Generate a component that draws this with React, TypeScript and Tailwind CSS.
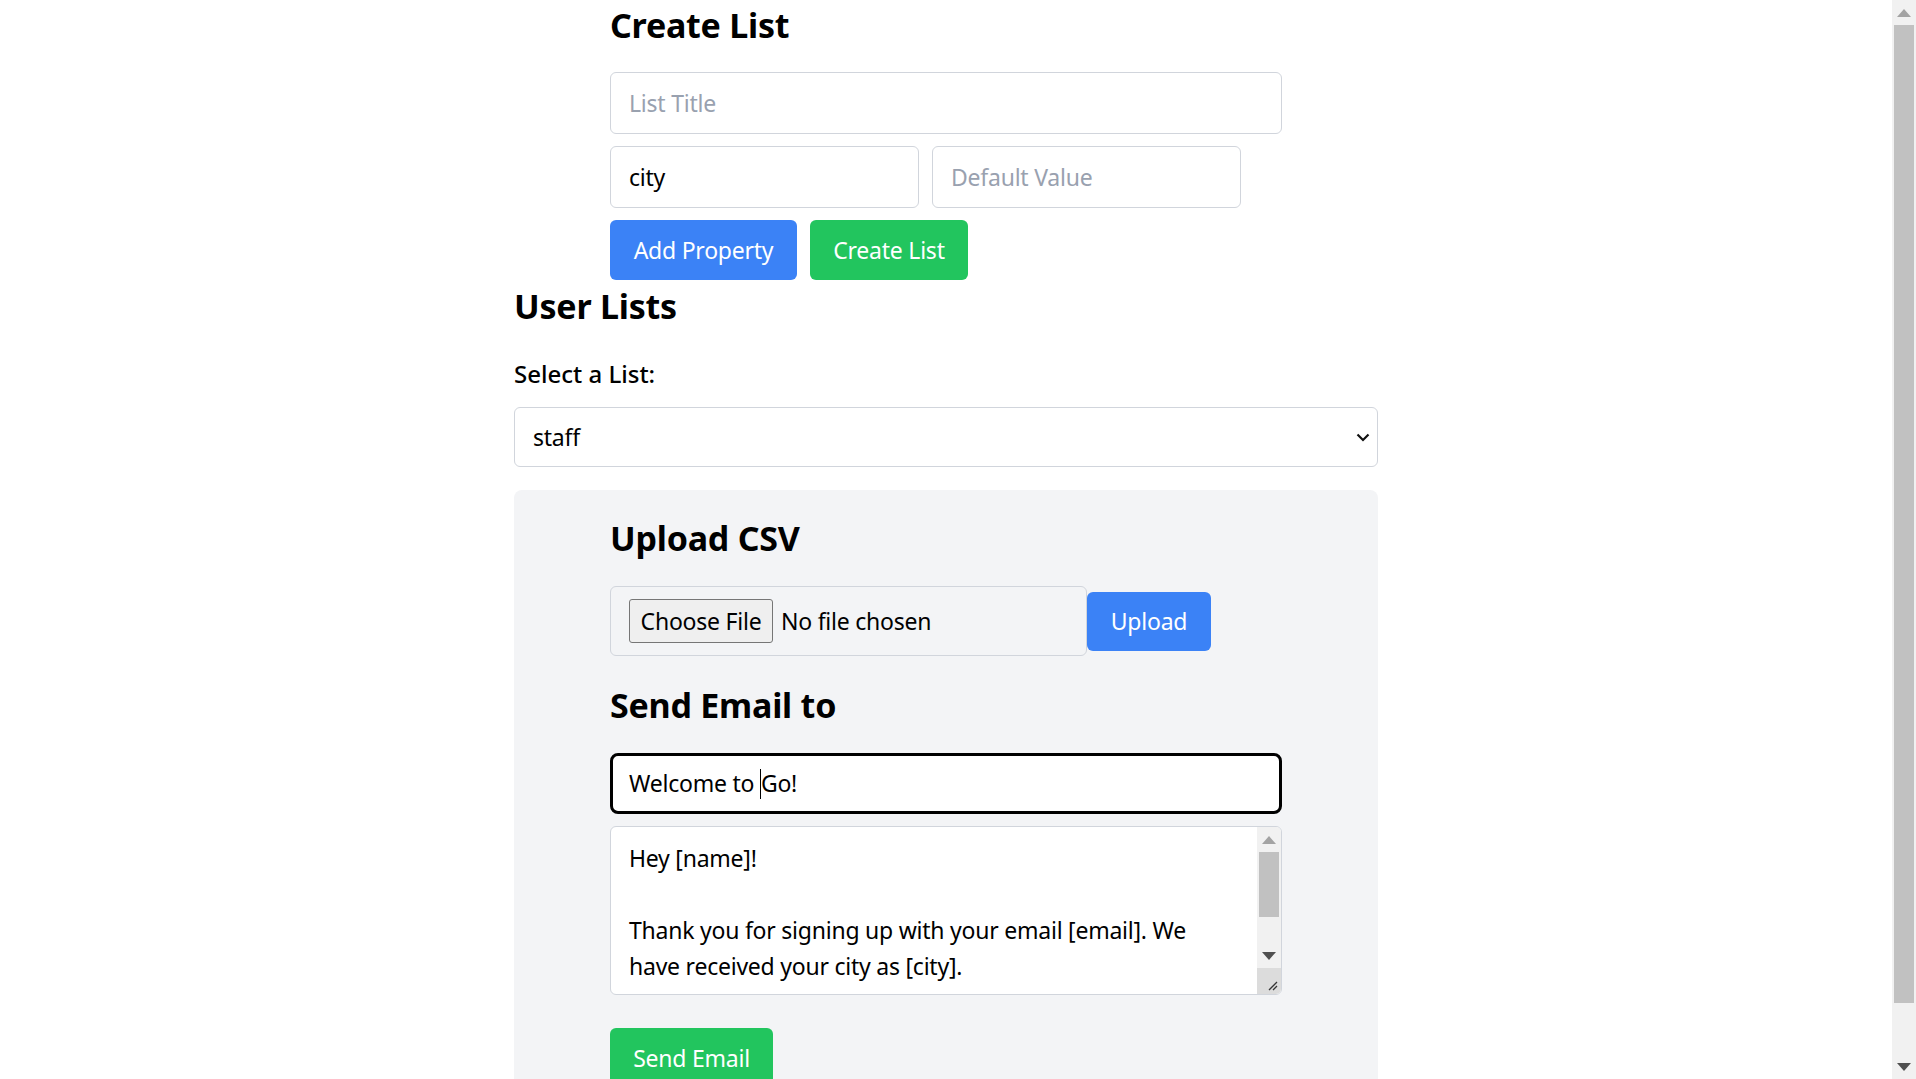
import React from "react";

const font = { fontFamily: '"Noto Sans", "Open Sans", sans-serif' };

function UpArrow({ color }: { color: string }) {
  return (
    <svg width="14" height="8" viewBox="0 0 14 8">
      <polygon points="7,0 14,8 0,8" fill={color} />
    </svg>
  );
}

function DownArrow({ color }: { color: string }) {
  return (
    <svg width="14" height="8" viewBox="0 0 14 8">
      <polygon points="0,0 14,0 7,8" fill={color} />
    </svg>
  );
}

export default function App() {
  return (
    <div className="flex h-screen overflow-hidden bg-white text-black" style={font}>
      {/* page content */}
      <div className="flex-1 min-w-0 text-[23px] tracking-[-0.01em]">
        <div className="w-[864px] mx-auto">
          {/* Create List */}
          <div className="w-[672px] mx-auto">
            <h2 className="text-[34px] leading-[50px] font-bold mb-[22px]">Create List</h2>
            <input
              placeholder="List Title"
              className="block w-full h-[62px] border border-gray-300 rounded-[6px] px-[18px] text-[23px] placeholder:text-gray-400 mb-[12px] outline-none"
            />
            <div className="flex gap-[13px] mb-[12px]">
              <input
                defaultValue="city"
                className="w-[309px] h-[62px] border border-gray-300 rounded-[6px] px-[18px] text-[23px] outline-none"
              />
              <input
                placeholder="Default Value"
                className="w-[309px] h-[62px] border border-gray-300 rounded-[6px] px-[18px] text-[23px] placeholder:text-gray-400 outline-none"
              />
            </div>
            <div className="flex gap-[13px]">
              <button className="w-[187px] h-[60px] rounded-[6px] bg-[#3b82f6] text-white text-[23px]">
                Add Property
              </button>
              <button className="w-[158px] h-[60px] rounded-[6px] bg-[#22c55e] text-white text-[23px]">
                Create List
              </button>
            </div>
          </div>

          {/* User Lists */}
          <h2 className="text-[34px] leading-[48px] font-bold mt-[2px] mb-[26px]">User Lists</h2>
          <label className="block text-[24px] leading-[36px] font-medium tracking-normal mb-[15px]">Select a List:</label>
          <div className="flex items-center justify-between h-[60px] border border-gray-300 rounded-[6px] pl-[18px] pr-[7px]">
            <span>staff</span>
            <svg width="14" height="9" viewBox="0 0 14 9">
              <path d="M1.5 1.5 L7 7 L12.5 1.5" fill="none" stroke="#111" strokeWidth="2.2" />
            </svg>
          </div>

          {/* panel */}
          <div className="mt-[23px] bg-[#f3f4f6] rounded-[8px] pt-[24px] pb-[24px]">
            <div className="w-[672px] mx-auto">
              <h2 className="text-[34px] leading-[48px] font-bold mb-[24px]">Upload CSV</h2>
              <div className="flex items-center">
                <div className="w-[477px] h-[70px] border border-gray-300 rounded-[6px] px-[18px] flex items-center">
                  <span className="h-[44px] w-[144px] flex items-center justify-center border border-[#767676] bg-[#efefef] rounded-[3px]">
                    Choose File
                  </span>
                  <span className="ml-[8px]">No file chosen</span>
                </div>
                <button className="w-[124px] h-[59px] rounded-[6px] bg-[#3b82f6] text-white text-[23px]">
                  Upload
                </button>
              </div>

              <h2 className="text-[34px] leading-[48px] font-bold mt-[25px] mb-[24px]">Send Email to</h2>
              <div className="h-[61px] border-[3px] border-black rounded-[8px] px-[16px] flex items-center bg-white mb-[12px]">
                <span className="whitespace-pre">Welcome to </span>
                <span className="w-[1px] h-[30px] bg-black" />
                <span>Go!</span>
              </div>

              <div className="h-[169px] border border-gray-300 rounded-[6px] bg-white flex overflow-hidden">
                <div className="flex-1 pl-[18px] pt-[13px] leading-[36px] whitespace-nowrap">
                  <div>Hey [name]!</div>
                  <div>&nbsp;</div>
                  <div>Thank you for signing up with your email [email]. We</div>
                  <div>have received your city as [city].</div>
                </div>
                <div className="w-[24px] bg-[#f1f1f1] flex flex-col">
                  <div className="h-[25px] flex items-center justify-center">
                    <UpArrow color="#a3a3a3" />
                  </div>
                  <div className="h-[65px] mx-[2px] bg-[#c1c1c1]" />
                  <div className="flex-1" />
                  <div className="h-[24px] flex items-center justify-center">
                    <DownArrow color="#505050" />
                  </div>
                  <div className="h-[26px] bg-[#dcdcdc] flex items-end justify-end p-[3px]">
                    <svg width="12" height="12" viewBox="0 0 12 12">
                      <path d="M11 3 L3 11 M11 7 L7 11" stroke="#333" strokeWidth="1.3" />
                    </svg>
                  </div>
                </div>
              </div>

              <button className="mt-[33px] w-[163px] h-[60px] rounded-[6px] bg-[#22c55e] text-white text-[23px]">
                Send Email
              </button>
            </div>
          </div>
        </div>
      </div>

      {/* page scrollbar */}
      <div className="w-[24px] h-full bg-[#f1f1f1] flex flex-col">
        <div className="h-[25px] flex items-center justify-center">
          <UpArrow color="#a3a3a3" />
        </div>
        <div className="h-[978px] mx-[2px] bg-[#c1c1c1]" />
        <div className="flex-1" />
        <div className="h-[24px] flex items-center justify-center">
          <DownArrow color="#505050" />
        </div>
      </div>
    </div>
  );
}
